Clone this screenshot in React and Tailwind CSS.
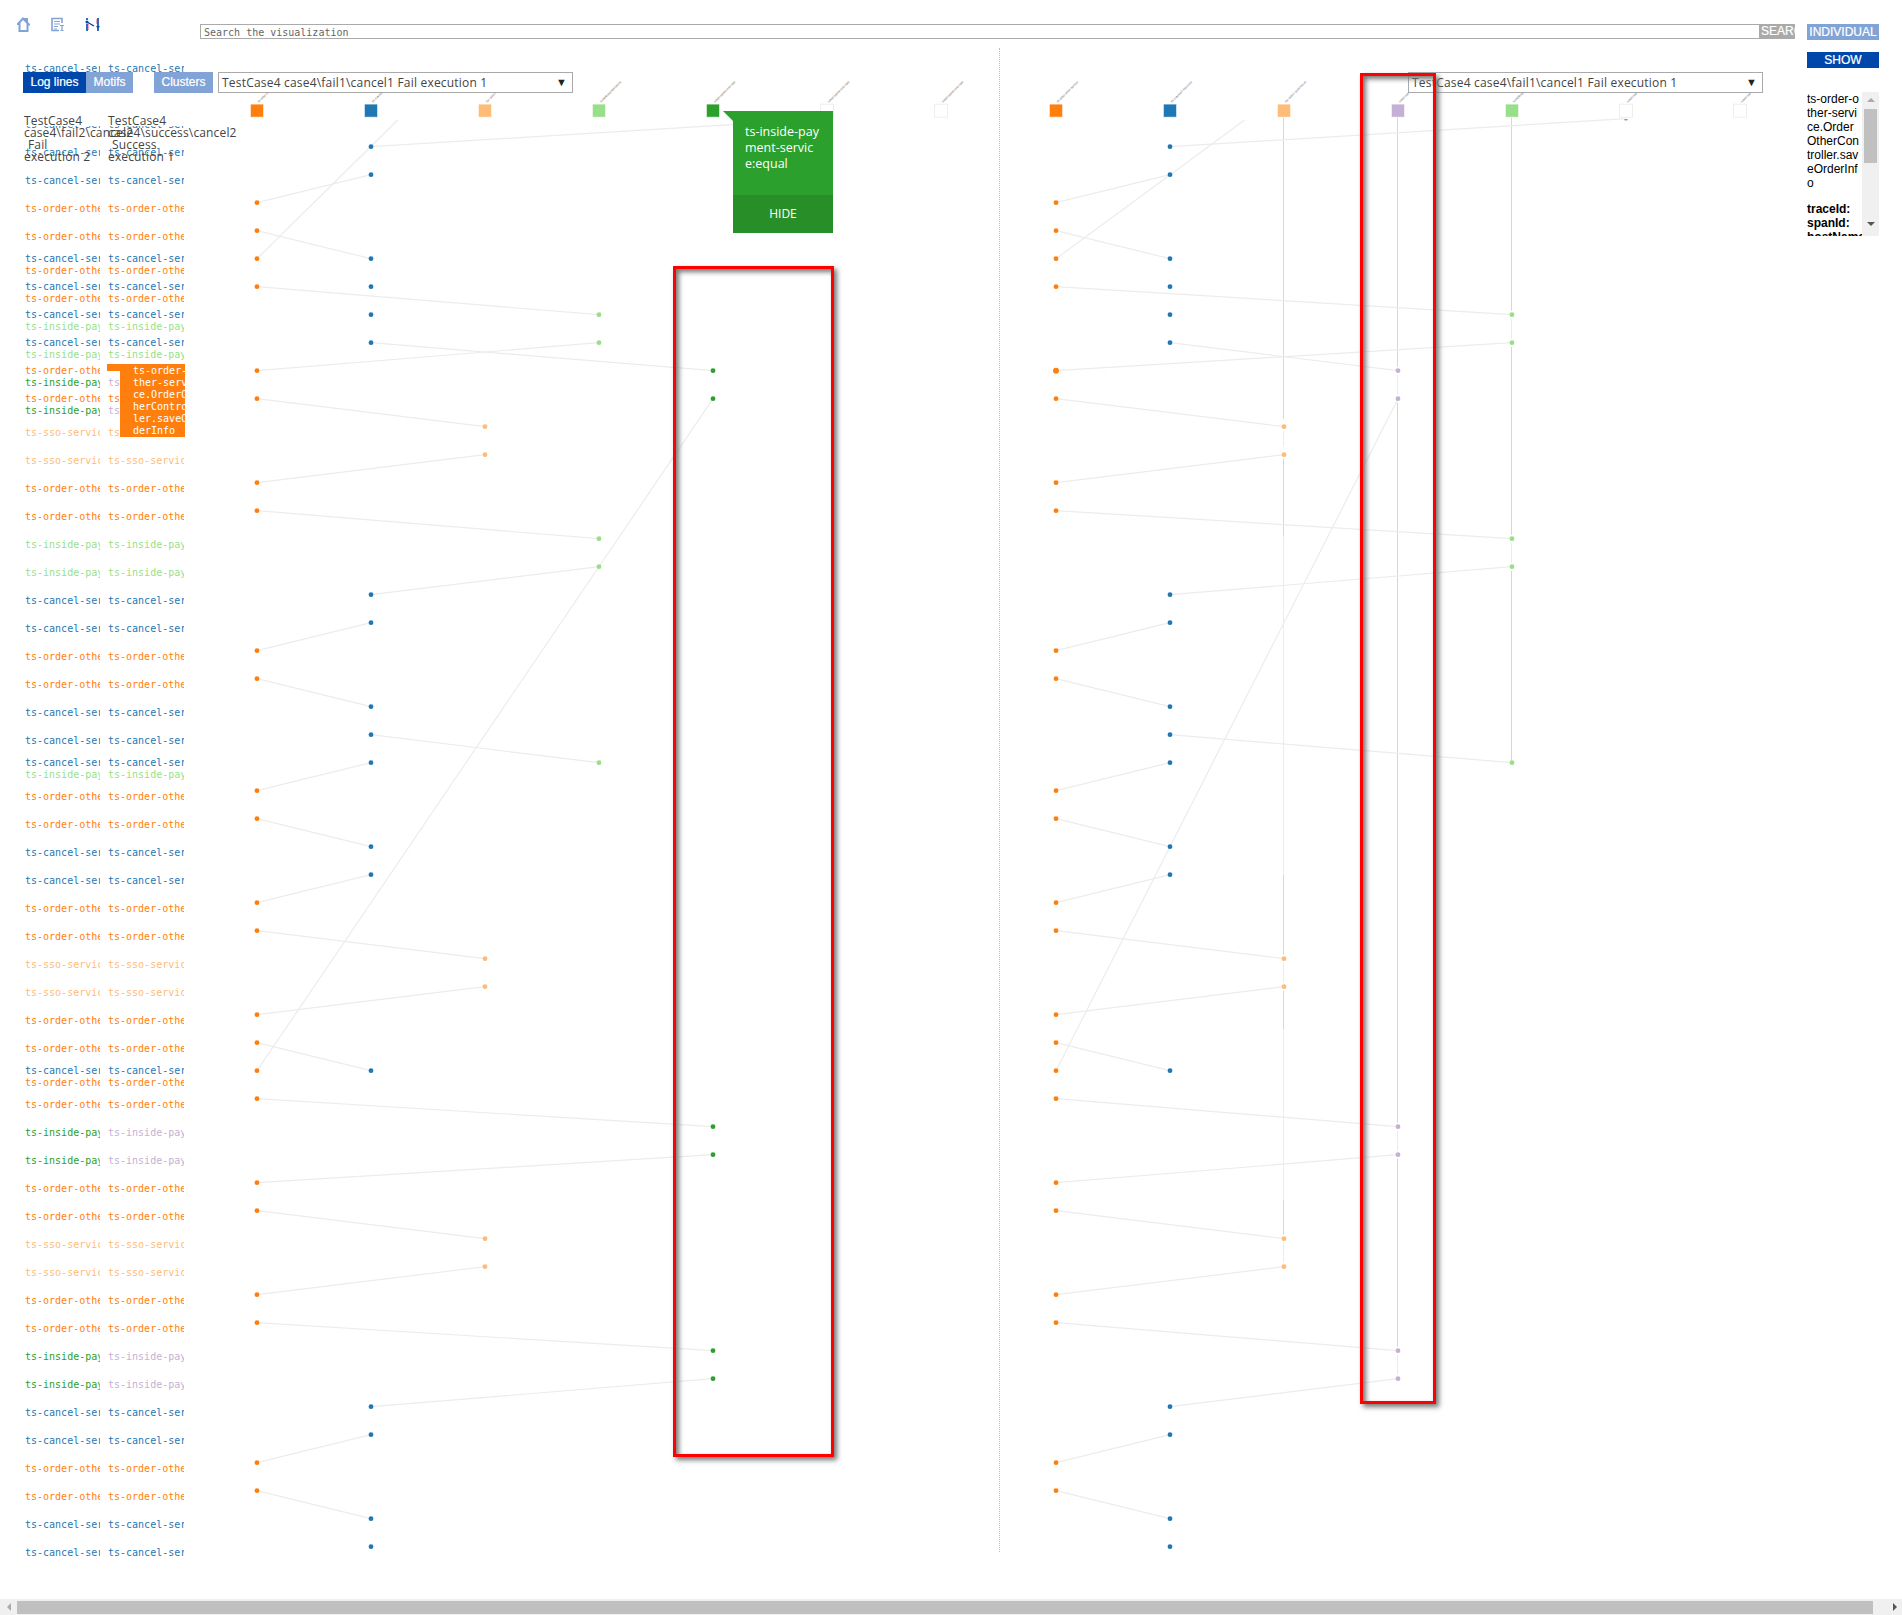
import React from "react";

const COLORS = { c: "#1f77b4", o: "#ff7f0e", s: "#ffbb78", l: "#98df8a", g: "#2ca02c" };
const NAMES = { c: "ts-cancel-service", o: "ts-order-other-service", s: "ts-sso-service", l: "ts-inside-payment-service" };

// one entry per row of the sequence, 28px apart, first dot at y=147
const ROWS = ["c","c","o","o","co","co","cl","cl","og","og","s","s","o","o","l","l","c","c","o","o","c","c","cl","o","o","c","c","o","o","s","s","o","o","co","o","g","g","o","o","s","s","o","o","g","g","c","c","o","o","c","c"];
const rowY = (i) => 147 + i * 28;

const LINKS = [
  ["c",147,"e",119],["o",203,"c",175],["o",231,"c",259],["o",287,"l",315],["o",371,"l",343],["c",343,"g",371],
  ["o",399,"s",427],["o",483,"s",455],["o",511,"l",539],["c",595,"l",567],["o",651,"c",623],["o",679,"c",707],
  ["c",735,"l",763],["o",791,"c",763],["o",819,"c",847],["o",903,"c",875],["o",931,"s",959],["o",1015,"s",987],
  ["o",1043,"c",1071],["o",1099,"g",1127],["o",1183,"g",1155],["o",1211,"s",1239],["o",1295,"s",1267],["o",1323,"g",1351],
  ["c",1407,"g",1379],["o",1463,"c",1435],["o",1491,"c",1519],["o",1071,"g",399],
];

const LEFT_X = { o: 257, c: 371, s: 485, l: 599, g: 713, e: 827, f: 941 };
const RIGHT_X = { o: 1056, c: 1170, s: 1284, g: 1398, l: 1512, e: 1626, f: 1740 };

const DARK = "#d6d6d6";
const LIGHT = "#ececec";
const VERTICALS = [
  [1283.5, 118, 419, DARK],[1283.5, 431, 447, LIGHT],[1283.5, 459, 537, DARK],[1283.5, 537, 875, LIGHT],[1283.5, 875, 955, DARK],[1283.5, 963, 983, LIGHT],
  [1283.5, 991, 1030, DARK],[1283.5, 1030, 1200, LIGHT],[1283.5, 1200, 1235, DARK],[1283.5, 1243, 1263, LIGHT],
  [1397.5, 118, 367, DARK],[1397.5, 375, 395, LIGHT],[1397.5, 403, 1123, DARK],[1397.5, 1131, 1151, LIGHT],[1397.5, 1159, 1347, DARK],[1397.5, 1355, 1375, LIGHT],
  [1511.5, 118, 311, DARK],[1511.5, 319, 339, LIGHT],[1511.5, 347, 535, DARK],[1511.5, 543, 563, LIGHT],[1511.5, 571, 763, DARK],
];

function Chart({ xs, box, width, extra, verticals, big }) {
  const heads = Object.keys(xs);
  return (
    <svg width={width} height="1551" viewBox={box} className="shrink-0 block">
      {(verticals || []).map(([x, a, b, col], i) => (
        <line key={i} x1={x} x2={x} y1={a} y2={b} stroke={col} strokeWidth="1" />
      ))}
      {LINKS.map(([a, ya, b, yb], i) => (
        <line key={i} x1={xs[a]} y1={ya} x2={xs[b]} y2={yb} stroke="#ececec" strokeWidth="1.2" />
      ))}
      <line x1={extra[0]} y1="259" x2={extra[1]} y2="120" stroke="#ececec" strokeWidth="1.2" />
      {heads.map((k) => {
        const col = big && k === "g" ? "#c5b0d5" : COLORS[k];
        const x = xs[k];
        return (
          <g key={k}>
            <text x={x + 2} y="103" fontSize="3.2" fill="#666" fontFamily="Liberation Sans" textLength="29" lengthAdjust="spacingAndGlyphs" transform={`rotate(-45 ${x + 2} 103)`}>
              {NAMES[k] || "ts-inside-payment-service:equal"}
            </text>
            {col ? (
              <rect x={x - 6} y="105" width="12" height="12" fill={col} stroke={col} strokeOpacity="0.5" />
            ) : (
              <rect x={x - 6.5} y="104.5" width="13" height="13" fill="#fff" stroke="#eee" />
            )}
          </g>
        );
      })}
      {ROWS.map((r, i) =>
        r.split("").map((k) => (
          <circle key={k} cx={xs[k]} cy={rowY(i)} r={big && i === 8 && k === "o" ? 3 : 2.4} fill={big && k === "g" ? "#c5b0d5" : COLORS[k]} />
        ))
      )}
      <ellipse cx={xs.e} cy="120" rx="2" ry="0.7" fill="#1f77b4" fillOpacity="0.7" />
    </svg>
  );
}

function Label({ k, second, hidden }) {
  const col = second && k === "g" ? "#c5b0d5" : COLORS[k];
  const text = { c: "ts-cancel-service", o: "ts-order-other-service", s: "ts-sso-service", l: "ts-inside-payment", g: "ts-inside-payment" }[k];
  return (
    <div className={`h-[12px] leading-[12px] whitespace-nowrap ${hidden ? "invisible" : ""}`} style={{ color: col }}>
      {text}
    </div>
  );
}

function LabelRow({ kinds, index }) {
  return (
    <div className="flex h-[28px] items-center">
      <div className="w-[75px] overflow-hidden">
        {kinds.split("").map((k) => <Label key={k} k={k} />)}
      </div>
      <div className="ml-[8px] w-[76px] overflow-hidden">
        {kinds.split("").map((k, j) => <Label key={k} k={k} second hidden={index === 8 && j === 0} />)}
      </div>
    </div>
  );
}

function Heading({ left, children }) {
  return (
    <div className={`absolute top-[115px] w-[75px] text-[12px] leading-[12px] tracking-[0.15px] text-[#444] font-['Open_Sans'] ${left}`}>
      {children}
    </div>
  );
}

function SelectBox({ left }) {
  return (
    <div className={`absolute top-[72px] h-[21px] w-[355px] flex items-center justify-between bg-white border border-[#aaa] pl-[3px] pr-[5px] text-[12px] text-[#444] font-['Open_Sans'] ${left}`}>
      <span className="tracking-[0.2px]">TestCase4 case4\fail1\cancel1 Fail execution 1</span>
      <span className="text-[11px] text-[#222]">▼</span>
    </div>
  );
}

export default function App() {
  return (
    <div className="relative w-[1902px] h-[1615px] overflow-hidden bg-white font-['Liberation_Sans']">
      <header className="flex h-[48px] items-start pt-[17px]">
        <div className="flex w-[200px] pl-[17px] gap-[22px]">
          <svg width="13" height="15" viewBox="0 0 13 15" fill="none" stroke="#82a3d6" strokeWidth="2">
            <path d="M1 7 L6 1.5 L8.5 4 V2 H10 V5.5 L12 7.5 H10.5 V14 H2.5 V7 Z" />
          </svg>
          <svg width="14" height="15" viewBox="0 0 14 15" className="-ml-[1px]" fill="none" stroke="#82a3d6">
            <path d="M8 13.5 H1 V1.5 H11 V6" strokeWidth="1.6" />
            <path d="M3 4.5 H9 M3 7 H9 M3 9.5 H7 M3 12 H6" strokeWidth="1" />
            <path d="M9 8.5 H13 M11 8.5 V13.5 M9.5 13.5 H12.5" strokeWidth="1.2" />
          </svg>
          <svg width="15" height="15" viewBox="0 0 15 15" className="-ml-[2px]" fill="none">
            <path d="M2 1 V3 M2 7 V14 M13 1 V8 M13 11 V14" stroke="#0047ab" strokeWidth="1.6" />
            <path d="M2 5 L9 9" stroke="#0047ab" strokeWidth="1.4" />
            <path d="M3 7 V13 M12 2 V7" stroke="#e23" strokeWidth="0.8" />
            <circle cx="2" cy="5" r="1.5" fill="#0047ab" />
            <circle cx="13" cy="9.5" r="1.5" fill="#0047ab" />
          </svg>
        </div>
        <div className="mt-[7px] flex h-[15px] w-[1595px]">
          <input
            readOnly
            placeholder="Search the visualization"
            className="w-[1560px] h-[15px] border border-[#aaa] pl-[3px] pt-[1px] text-[10px] font-['DejaVu_Sans_Mono'] placeholder:text-[#666] outline-none"
          />
          <div className="w-[35px] overflow-hidden bg-[#aaa] text-[12px] leading-[15px] text-white pl-[1px] whitespace-nowrap [-webkit-text-stroke:0.2px_white]">SEARCH</div>
        </div>
        <div className="mt-[7px] ml-[12px] flex h-[16px] w-[72px] justify-center overflow-hidden bg-[#82a3d6] text-[12px] leading-[16px] text-white whitespace-nowrap [-webkit-text-stroke:0.2px_white]">INDIVIDUAL</div>
      </header>

      <main className="flex h-[1551px]">
        <div className="w-[200px] shrink-0 pl-[25px] pt-[7px] font-['DejaVu_Sans_Mono'] text-[10px]">
          <LabelRow kinds="c" />
          <div className="h-[28px]" />
          {/* only a sliver of this row shows between the heading lines */}
          <div className="flex h-[28px] items-start text-[#1f77b4]">
            <div className="mt-[15px] w-[75px] h-[2px] overflow-hidden"><div className="-mt-[7px] h-[12px] leading-[12px] whitespace-nowrap">ts-cancel-service</div></div>
            <div className="mt-[15px] ml-[8px] w-[76px] h-[2px] overflow-hidden"><div className="-mt-[7px] h-[12px] leading-[12px] whitespace-nowrap">ts-cancel-service</div></div>
          </div>
          {ROWS.map((r, i) => <LabelRow key={i} kinds={r} index={i} />)}
        </div>

        <Chart xs={LEFT_X} box="200 48.3 799 1551" width="799" extra={[257, 398]} />
        <div className="h-[1504px] w-px shrink-0 border-l border-dotted border-[#bbb]" />
        <Chart xs={RIGHT_X} box="1000 48.3 800 1551" width="800" extra={[1056, 1245]} verticals={VERTICALS} big />

        <aside className="ml-[7px] w-[72px] shrink-0 pt-[4px]">
          <div className="h-[16px] bg-[#0047ab] text-center text-[12px] leading-[16px] text-white [-webkit-text-stroke:0.2px_white]">SHOW</div>
          <div className="mt-[24px] flex h-[144px] overflow-hidden text-[12px] leading-[14px] text-black">
            <div className="w-[55px] shrink-0 overflow-hidden whitespace-nowrap">
              ts-order-o<br />ther-servi<br />ce.Order<br />OtherCon<br />troller.sav<br />eOrderInf<br />o
              <div className="mt-[12px] font-bold">traceId:<br />spanId:<br />hostName:</div>
            </div>
            <div className="flex w-[17px] flex-col items-center bg-[#f0f0f0]">
              <div className="mt-[6px] h-0 w-0 border-x-[4px] border-b-[4px] border-x-transparent border-b-[#aaa]" />
              <div className="mt-[7px] h-[54px] w-[13px] bg-[#c0c0c0]" />
              <div className="mt-[59px] h-0 w-0 border-x-[4px] border-t-[4px] border-x-transparent border-t-[#555]" />
            </div>
          </div>
        </aside>
      </main>

      <div className="flex h-[16px] items-center bg-[#f0f0f0]">
        <div className="flex w-[17px] justify-center">
          <div className="h-0 w-0 border-y-[4px] border-r-[4px] border-y-transparent border-r-[#aaa]" />
        </div>
        <div className="h-[13px] w-[1856px] bg-[#c0c0c0]" />
        <div className="flex flex-1 justify-end pr-[5px]">
          <div className="h-0 w-0 border-y-[4px] border-l-[4px] border-y-transparent border-l-[#555]" />
        </div>
      </div>

      {/* things lying over the sequence */}
      <div className="absolute left-0 top-[72px] flex h-[21px] w-[218px] bg-white pl-[23px] text-[12px] leading-[21px] text-white [-webkit-text-stroke:0.2px_white]">
        <div className="w-[63px] bg-[#0047ab] text-center">Log lines</div>
        <div className="w-[47px] bg-[#82a3d6] text-center">Motifs</div>
        <div className="ml-[21px] w-[59px] bg-[#82a3d6] text-center">Clusters</div>
      </div>

      <Heading left="left-[24px]">
        TestCase4<br /><span className="whitespace-nowrap">case4\fail2\cancel2</span><br /><span className="pl-[4px]">Fail</span><br />execution 2
      </Heading>
      <Heading left="left-[108px]">
        TestCase4<br /><span className="whitespace-nowrap">case4\success\cancel2</span><br /><span className="pl-[4px]">Success</span><br />execution 1
      </Heading>

      <div className="absolute left-[107px] top-[364px] h-[7px] w-[13px] bg-[#ff7f0e]" />
      <div className="absolute left-[120px] top-[364px] h-[73px] w-[65px] overflow-hidden bg-[#ff7f0e] pl-[13px] pt-[1px] font-['DejaVu_Sans_Mono'] text-[10px] leading-[12px] text-white whitespace-nowrap">
        ts-order-o<br />ther-servi<br />ce.OrderOt<br />herControl<br />ler.saveOr<br />derInfo
      </div>

      <SelectBox left="left-[218px]" />
      <SelectBox left="left-[1408px]" />

      <div className="absolute left-[733px] top-[111px] w-[100px] bg-[#2ca02c] text-[12.5px] leading-[16px] text-white font-['Open_Sans']">
        <div className="absolute -left-[10px] top-0 h-[10px] w-[10px] bg-[#2ca02c] [clip-path:polygon(0_0,100%_0,100%_100%)]" />
        <div className="h-[84px] px-[12px] pt-[13px] break-all">ts-inside-payment-service:equal</div>
        <div className="h-[38px] bg-[#288f28] text-center text-[12px] leading-[38px]">HIDE</div>
      </div>

      <div className="absolute left-[673px] top-[266px] h-[1191px] w-[161px] border-[3px] border-[#f00] shadow-[3px_3px_5px_#777,inset_3px_3px_5px_#777]" />
      <div className="absolute left-[1360px] top-[73px] h-[1331px] w-[76px] border-[3px] border-[#f00] shadow-[3px_3px_5px_#777,inset_3px_3px_5px_#777]" />
    </div>
  );
}
